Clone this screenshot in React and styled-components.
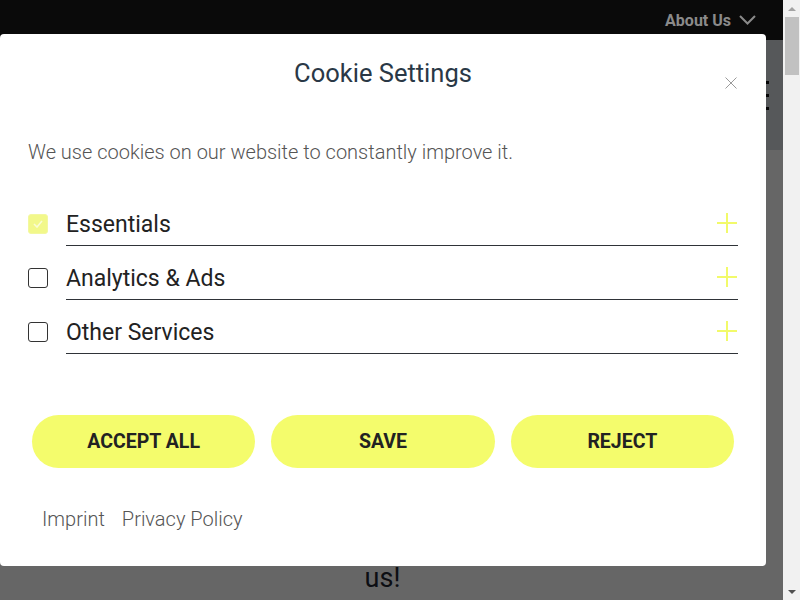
import React, { useState } from 'react';
import styled, { createGlobalStyle } from 'styled-components';

const GlobalStyle = createGlobalStyle`
  html, body {
    margin: 0;
    padding: 0;
    font-family: Roboto, "Liberation Sans", Arial, sans-serif;
    background: #fff;
    overflow: hidden;
  }
`;

const Shell = styled.div`
  display: flex;
  height: 100vh;
`;

const Main = styled.main`
  flex: 1;
  overflow: hidden;
`;

const ScrollBar = styled.div`
  flex: none;
  width: 17px;
  background: #f1f1f1;
  display: flex;
  flex-direction: column;
`;

const Arrow = styled.div`
  height: 17px;
  display: flex;
  align-items: center;
  justify-content: center;
`;

const Thumb = styled.div`
  height: 58px;
  margin: 0 1px 0 2px;
  background: #c1c1c1;
`;

const Spacer = styled.div`
  flex: 1;
`;

const Header = styled.header`
  position: relative;
  z-index: 2;
  height: 40px;
  background: #0a0a0a;
  display: flex;
  justify-content: flex-end;
  align-items: center;
  padding-right: 27px;
`;

const NavItem = styled.div`
  display: flex;
  align-items: center;
  gap: 8px;
  color: #8a8a8a;
  font-weight: 700;
  font-size: 16px;
`;

const Hero = styled.div`
  height: 110px;
  background: #d7dbe0;
  display: flex;
  justify-content: flex-end;
  align-items: center;
  padding-right: 14px;
`;

const Burger = styled.div`
  display: flex;
  flex-direction: column;
  gap: 10px;

  span {
    display: block;
    width: 26px;
    height: 3px;
    background: #111;
  }
`;

const Heading = styled.h2`
  margin: 0;
  padding: 412px 18px 0 0;
  text-align: center;
  font-weight: 400;
  font-size: 27px;
  color: #1e2530;
`;

const Backdrop = styled.div`
  position: fixed;
  inset: 0 17px 0 0;
  background: rgba(0, 0, 0, 0.6);
  z-index: 1;
`;

const Modal = styled.div`
  position: fixed;
  left: 0;
  top: 34px;
  width: 766px;
  height: 532px;
  background: #fff;
  border-radius: 4px;
  z-index: 3;
  box-sizing: border-box;
  padding: 23px 28px 0 28px;
`;

const Title = styled.h1`
  margin: 0;
  text-align: center;
  font-size: 25.5px;
  line-height: 32px;
  font-weight: 400;
  color: #2a3846;
`;

const Close = styled.button`
  position: absolute;
  top: 43px;
  right: 29px;
  width: 12px;
  height: 12px;
  padding: 0;
  border: none;
  background: none;
  cursor: pointer;
`;

const Intro = styled.p`
  margin: 51px 0 0;
  font-size: 20px;
  line-height: 24px;
  font-weight: 300;
  color: #555;
`;

const List = styled.div`
  margin-top: 28px;
`;

const Row = styled.div`
  display: flex;
  align-items: flex-start;
`;

const Box = styled.span`
  flex: none;
  box-sizing: border-box;
  width: 20px;
  height: 20px;
  margin-top: 22px;
  border-radius: 3px;
  display: flex;
  align-items: center;
  justify-content: center;
  border: ${({ $checked }) => ($checked ? '1px solid #f3f8a0' : '1.5px solid #333')};
  background: ${({ $checked }) => ($checked ? '#f2f88a' : '#fff')};
`;

const Label = styled.div`
  flex: 1;
  margin-left: 18px;
  padding: 20px 0 7px;
  border-bottom: 1px solid #2f3338;
  display: flex;
  justify-content: space-between;
  align-items: center;
  font-size: 23px;
  line-height: 26px;
  color: #222;
`;

const Plus = styled.svg`
  margin-right: 1px;
  margin-top: -4px;
`;

const Buttons = styled.div`
  display: flex;
  gap: 16px;
  margin: 61px 4px 0;
`;

const Button = styled.button`
  flex: 1;
  height: 53px;
  border: none;
  border-radius: 27px;
  background: #f4fc6c;
  font-family: inherit;
  font-size: 19.5px;
  font-weight: 700;
  color: #222;
  text-transform: uppercase;
  cursor: pointer;
`;

const Footer = styled.div`
  display: flex;
  gap: 17px;
  margin: 39px 0 0 14px;
`;

const FooterLink = styled.a`
  font-size: 20px;
  line-height: 24px;
  font-weight: 300;
  color: #555;
  text-decoration: none;
`;

const categories = [
  { name: 'Essentials', checked: true },
  { name: 'Analytics & Ads', checked: false },
  { name: 'Other Services', checked: false },
];

const App = () => {
  const [items] = useState(categories);

  return (
    <>
      <GlobalStyle />
      <Shell>
        <Main>
          <Header>
            <NavItem>
              About Us
              <svg width="17" height="10" viewBox="0 0 17 10" fill="none">
                <path d="M1 1l7.5 7.5L16 1" stroke="#8a8a8a" strokeWidth="2" />
              </svg>
            </NavItem>
          </Header>
          <Hero>
            <Burger>
              <span />
              <span />
              <span />
            </Burger>
          </Hero>
          <Heading>us!</Heading>
        </Main>
        <ScrollBar>
          <Arrow>
            <svg width="8" height="4" viewBox="0 0 8 4">
              <path d="M0 4L4 0L8 4Z" fill="#a3a3a3" />
            </svg>
          </Arrow>
          <Thumb />
          <Spacer />
          <Arrow>
            <svg width="8" height="4" viewBox="0 0 8 4">
              <path d="M0 0L8 0L4 4Z" fill="#505050" />
            </svg>
          </Arrow>
        </ScrollBar>
      </Shell>
      <Backdrop />
      <Modal>
        <Title>Cookie Settings</Title>
        <Close aria-label="Close">
          <svg width="12" height="12" viewBox="0 0 12 12">
            <path d="M0.5 0.5l11 11M11.5 0.5l-11 11" stroke="#9a9a9a" strokeWidth="1" />
          </svg>
        </Close>
        <Intro>We use cookies on our website to constantly improve it.</Intro>
        <List>
          {items.map((item) => (
            <Row key={item.name}>
              <Box $checked={item.checked}>
                {item.checked && (
                  <svg width="10" height="8" viewBox="0 0 10 8" fill="none">
                    <path d="M1 4l3 3 5-6" stroke="#fafcd6" strokeWidth="1.6" />
                  </svg>
                )}
              </Box>
              <Label>
                {item.name}
                <Plus width="20" height="20" viewBox="0 0 20 20">
                  <path d="M10 0v20M0 10h20" stroke="#f2fa6a" strokeWidth="2" />
                </Plus>
              </Label>
            </Row>
          ))}
        </List>
        <Buttons>
          <Button>Accept all</Button>
          <Button>Save</Button>
          <Button>Reject</Button>
        </Buttons>
        <Footer>
          <FooterLink href="#imprint">Imprint</FooterLink>
          <FooterLink href="#privacy">Privacy Policy</FooterLink>
        </Footer>
      </Modal>
    </>
  );
};

export default App;
